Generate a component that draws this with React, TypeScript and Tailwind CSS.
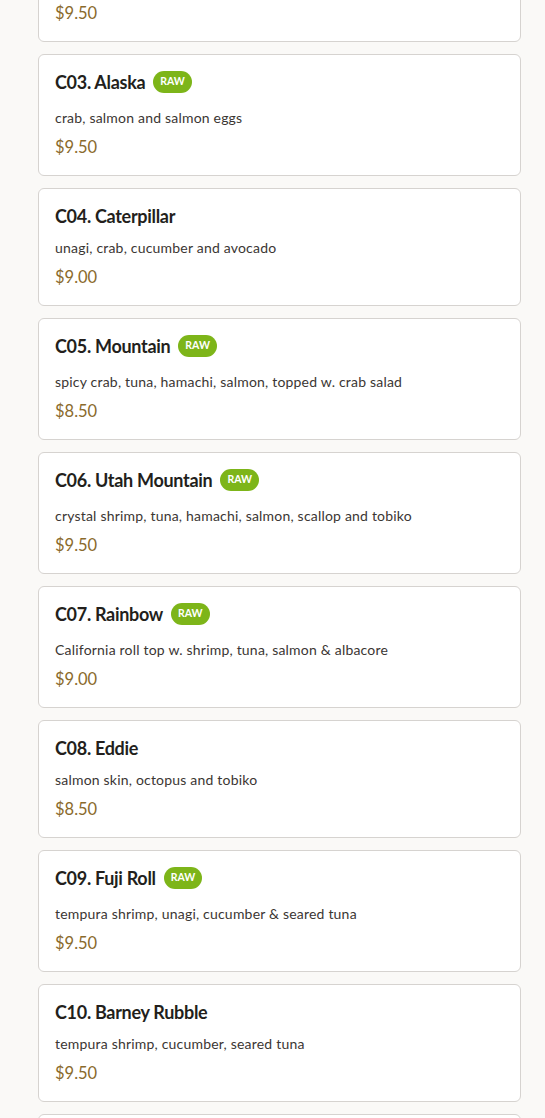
const items = [
  { code: "C02", name: "Spicy Tuna", desc: "spicy tuna and cucumber", price: "$9.50", raw: true },
  { code: "C03", name: "Alaska", desc: "crab, salmon and salmon eggs", price: "$9.50", raw: true },
  { code: "C04", name: "Caterpillar", desc: "unagi, crab, cucumber and avocado", price: "$9.00", raw: false },
  { code: "C05", name: "Mountain", desc: "spicy crab, tuna, hamachi, salmon, topped w. crab salad", price: "$8.50", raw: true },
  { code: "C06", name: "Utah Mountain", desc: "crystal shrimp, tuna, hamachi, salmon, scallop and tobiko", price: "$9.50", raw: true },
  { code: "C07", name: "Rainbow", desc: "California roll top w. shrimp, tuna, salmon & albacore", price: "$9.00", raw: true },
  { code: "C08", name: "Eddie", desc: "salmon skin, octopus and tobiko", price: "$8.50", raw: false },
  { code: "C09", name: "Fuji Roll", desc: "tempura shrimp, unagi, cucumber & seared tuna", price: "$9.50", raw: true },
  { code: "C10", name: "Barney Rubble", desc: "tempura shrimp, cucumber, seared tuna", price: "$9.50", raw: false },
  { code: "C11", name: "Dragon Roll", desc: "shrimp tempura, cucumber, topped w. unagi and avocado", price: "$10.50", raw: false },
];

type Item = (typeof items)[number];

const MenuCard = ({ item }: { item: Item }) => {
  return (
    <div className="rounded-[6px] border border-[#d6d3d0] bg-white px-4 pt-4 pb-4">
      <div className="flex items-center gap-2">
        <h3 className="text-[18px] leading-[22px] font-bold tracking-[-0.3px] text-[#231f1c]">
          {item.code}. {item.name}
        </h3>
        {item.raw && (
          <span className="flex h-[22px] items-center rounded-full bg-[#7db519] px-[7px] text-[10.5px] font-bold text-white">
            RAW
          </span>
        )}
      </div>
      <p
        className={
          item.raw
            ? "mt-[15px] text-[14px] leading-[20px] tracking-[0.2px] text-[#3b3633]"
            : "mt-[11px] text-[14px] leading-[20px] tracking-[0.2px] text-[#3b3633]"
        }
      >
        {item.desc}
      </p>
      <div className="mt-[8px] text-[16.5px] leading-[23px] text-[#8a6a2c]">
        {item.price}
      </div>
    </div>
  );
};

export default function App() {
  return (
    <div className="min-h-screen overflow-hidden bg-[#faf9f7] font-['Lato',sans-serif]">
      <div className="mx-[38px] mt-[-80px] flex w-[483px] flex-col gap-[12px]">
        {items.map((item) => (
          <MenuCard key={item.code} item={item} />
        ))}
      </div>
    </div>
  );
}
